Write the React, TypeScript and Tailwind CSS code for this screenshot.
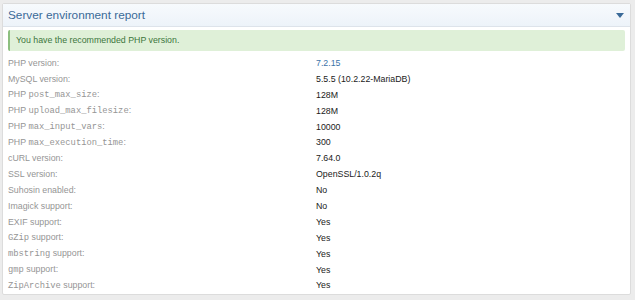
import React from "react";

const mono = "font-['Liberation_Mono',monospace]";

const rows: { label: React.ReactNode; value: React.ReactNode }[] = [
  { label: <>PHP version:</>, value: <span className="text-[#3b73a8]">7.2.15</span> },
  { label: <>MySQL version:</>, value: "5.5.5 (10.2.22-MariaDB)" },
  { label: <>PHP <code className="font-['Liberation_Mono',monospace]">post_max_size</code>:</>, value: "128M" },
  { label: <>PHP <code className="font-['Liberation_Mono',monospace]">upload_max_filesize</code>:</>, value: "128M" },
  { label: <>PHP <code className="font-['Liberation_Mono',monospace]">max_input_vars</code>:</>, value: "10000" },
  { label: <>PHP <code className="font-['Liberation_Mono',monospace]">max_execution_time</code>:</>, value: "300" },
  { label: <>cURL version:</>, value: "7.64.0" },
  { label: <>SSL version:</>, value: "OpenSSL/1.0.2q" },
  { label: <>Suhosin enabled:</>, value: "No" },
  { label: <>Imagick support:</>, value: "No" },
  { label: <>EXIF support:</>, value: "Yes" },
  { label: <><code className="font-['Liberation_Mono',monospace]">GZip</code> support:</>, value: "Yes" },
  { label: <><code className="font-['Liberation_Mono',monospace]">mbstring</code> support:</>, value: "Yes" },
  { label: <><code className="font-['Liberation_Mono',monospace]">gmp</code> support:</>, value: "Yes" },
  { label: <><code className="font-['Liberation_Mono',monospace]">ZipArchive</code> support:</>, value: "Yes" },
];
void mono;

export default function App() {
  return (
    <div className="w-[635px] h-[300px] bg-[#ececec] pt-[3px] pl-[2px] font-['Liberation_Sans',Arial,sans-serif]">
      <div className="w-[629px] h-[292px] bg-white border border-[#dcdcdc] rounded-[2px] flex flex-col">
        <div className="h-[23px] flex items-center justify-between pl-[5px] pr-[6px] border-b border-[#dde3ea] bg-gradient-to-b from-[#f7fafd] to-[#edf3f9]">
          <span className="text-[11.8px] text-[#3a6a98] leading-none mt-[1px]">Server environment report</span>
          <svg width="8" height="5" viewBox="0 0 8 5" className="mt-[1px]">
            <path d="M0 0 H8 L4 5 Z" fill="#3a6a98" />
          </svg>
        </div>
        <div className="mx-[5px] mt-[3px] h-[21px] flex items-center bg-[#dff0d8] border-l-[2px] border-[#8cbf7f] rounded-[2px] pl-[6px] text-[8.8px] text-[#3c763d]">
          You have the recommended PHP version.
        </div>
        <div className="flex flex-col px-[5px] pt-[5px]">
          {rows.map((r, i) => (
            <div key={i} className="h-[15.9px] flex items-center text-[8.8px]">
              <div className="w-[308px] text-[#959595]">{r.label}</div>
              <div className="text-[#1a1a1a]">{r.value}</div>
            </div>
          ))}
        </div>
      </div>
    </div>
  );
}
